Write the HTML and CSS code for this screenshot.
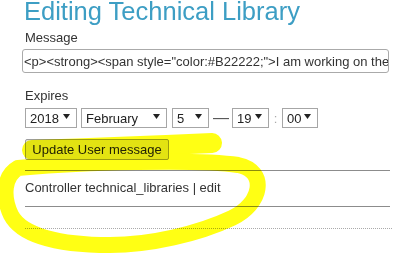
FILE: index.html
```html
<!DOCTYPE html>
<html lang="en">
<head>
<meta charset="utf-8">
<title>Editing Technical Library</title>
<link rel="stylesheet" href="styles.css">
</head>
<body>
<div class="page">
  <h1 class="title">Editing Technical Library</h1>
  <form class="form">
    <label class="label">Message</label>
    <input class="msg" type="text" value="&lt;p&gt;&lt;strong&gt;&lt;span style=&quot;color:#B22222;&quot;&gt;I am working on the technical library&lt;/span&gt;&lt;/strong&gt;&lt;/p&gt;">
    <label class="label expires">Expires</label>
    <div class="date-row">
      <span class="sel w-year"><span>2018</span><i class="arr"></i></span>
      <span class="sel w-month"><span>February</span><i class="arr"></i></span>
      <span class="sel w-day"><span>5</span><i class="arr"></i></span>
      <span class="dash">—</span>
      <span class="sel w-hour"><span>19</span><i class="arr"></i></span>
      <span class="colon">:</span>
      <span class="sel w-min"><span>00</span><i class="arr"></i></span>
    </div>
    <button class="btn" type="button">Update User message</button>
  </form>
  <div class="footer">Controller technical_libraries | edit</div>
  <div class="dots"></div>
</div>
<svg class="marker" width="409" height="261" viewBox="0 0 409 261">
  <path class="hl" d="M32,150 Q120,147 212,143" stroke-width="20"/>
  <path class="hl" d="M18,168 C80,162 200,159 238,165 C268,171 262,204 232,218 C198,234 150,245 110,245 C60,245 22,236 11,215 C2,196 4,176 18,168 Z" stroke-width="16"/>
</svg>
</body>
</html>
```
FILE: styles.css
```css
body {
  margin: 0;
  background: #fff;
  color: #333;
  font-family: "Liberation Sans", Arial, sans-serif;
}

.page {
  width: 365px;
  padding-left: 25px;
}

.title {
  margin: 0 0 0 -1px;
  font-weight: normal;
  font-size: 25.5px;
  line-height: 22px;
  color: #3d9ec4;
  white-space: nowrap;
}

.form {
  margin: 0;
}

.label {
  display: block;
  margin-top: 8px;
  font-size: 13px;
  line-height: 15px;
  color: #333;
}

.expires {
  margin-top: 15px;
}

.msg {
  display: block;
  box-sizing: border-box;
  width: 367px;
  height: 24px;
  margin: 4px 0 0 -3px;
  padding: 0 0 0 1px;
  border: 1px solid #aaa;
  border-radius: 3px;
  font: 13px "Liberation Sans", Arial, sans-serif;
  color: #333;
  background: #fff;
  outline: none;
}

.date-row {
  display: flex;
  align-items: center;
  height: 20px;
  margin-top: 5px;
}

.sel {
  box-sizing: border-box;
  display: flex;
  align-items: center;
  justify-content: space-between;
  height: 20px;
  padding: 0 6px 0 4px;
  border: 1px solid #a6a6a6;
  font-size: 13px;
  color: #222;
  background: #fff;
}

.arr {
  display: block;
  width: 7px;
  height: 5px;
  margin-bottom: 3px;
  background: #222;
  clip-path: polygon(0 0, 100% 0, 50% 100%);
}

.w-year { width: 52px; }
.w-month { width: 86px; margin-left: 4px; }
.w-day { width: 37px; margin-left: 5px; }
.w-hour { width: 37px; }
.w-min { width: 36px; }

.dash {
  margin: 0 3px 0 4px;
  font-size: 16px;
  color: #555;
}

.colon {
  width: 13px;
  text-align: center;
  font-size: 13px;
  color: #aaa;
}

.btn {
  display: block;
  box-sizing: border-box;
  width: 144px;
  height: 21px;
  margin-top: 11px;
  padding: 0;
  border: 1px solid #9d9d9d;
  border-radius: 2px;
  background: #e3e3e3;
  font: 13px "Liberation Sans", Arial, sans-serif;
  color: #222;
}

.footer {
  margin-top: 10px;
  padding: 9px 0 11px;
  border-top: 1px solid #8c8c8c;
  border-bottom: 1px solid #8c8c8c;
  font-size: 13px;
  line-height: 15px;
  color: #333;
}

.dots {
  width: 367px;
  margin-top: 21px;
  border-top: 1px dotted #aaa;
}

.marker {
  position: absolute;
  top: 0;
  left: 0;
  pointer-events: none;
  mix-blend-mode: multiply;
}

.hl {
  fill: none;
  stroke: #ffff14;
  stroke-linecap: round;
  stroke-linejoin: round;
}
```
